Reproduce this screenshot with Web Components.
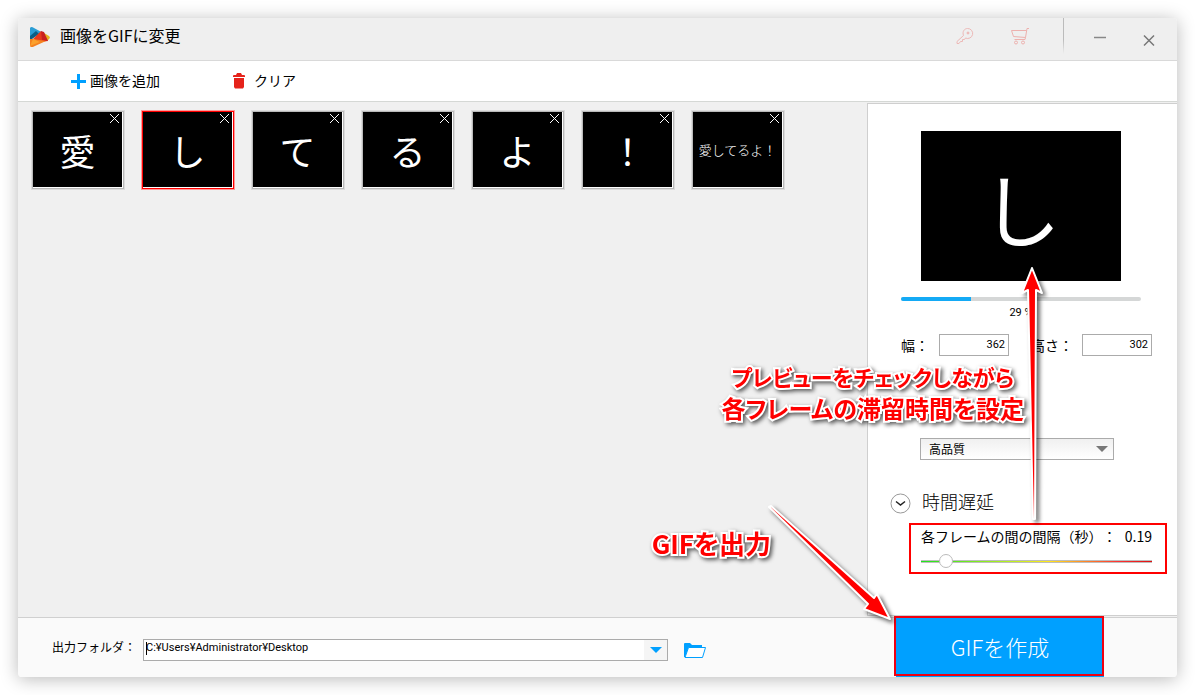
<!DOCTYPE html>
<html lang="ja">
<head>
<meta charset="utf-8">
<title>画像をGIFに変更</title>
<style>
html, body { height: 100%; }
body { margin: 0; background: #fff; color: #000; font-family: "Noto Sans CJK JP", sans-serif; }
</style>
</head>
<body>
<gif-maker></gif-maker>
<script>
const define = (name, html, setup) => {
  const template = document.createElement('template');
  template.innerHTML = html;
  customElements.define(name, class extends HTMLElement {
    connectedCallback() {
      if (this.shadowRoot) return;
      const root = this.attachShadow({ mode: 'open' });
      root.append(template.content.cloneNode(true));
      if (setup) setup(this, root);
    }
  });
};

define('title-bar', `
<style>
:host { display: flex; align-items: center; box-sizing: border-box; height: 43px; padding: 0 22px 0 12px; background: #efefef; border-bottom: 1px solid #d9d9d9; border-radius: 4px 4px 0 0; }
h1 { margin: 0; flex: 1; padding-left: 10px; font-size: 16px; line-height: 24px; font-weight: 400; padding-bottom: 8px; }
.logo { width: 20px; height: 20px; margin-top: -4px; }
button { border: 0; padding: 0; background: none; display: block; height: 18px; }
svg { display: block; }
.tools { display: flex; align-items: center; gap: 37px; padding-bottom: 6px; }
.sep { align-self: flex-start; width: 1px; height: 36px; margin: 0 30px 0 34px; background: linear-gradient(#bbb 60%, #efefef); }
.win { display: flex; gap: 37px; align-items: center; }
</style>
<svg class="logo" viewBox="0 0 20 20" aria-hidden="true">
  <path d="M0 1Q1-1 4 1L15 7 8 8 0 12Z" fill="#2b9dd4"/><path d="M0 9L6 4 9 7 2 12 0 12Z" fill="#0a5f86"/>
  <path d="M14 6L19 9Q21 11 18 13L15 14Z" fill="#e4b31f"/><path d="M3 12L11 4 18 14 10 15Z" fill="#e63b1c"/>
  <path d="M11 4L14 5 18 14 12 13Z" fill="#c9201d"/><path d="M0 12L3 12 16 14 5 19Q0 22 0 18Z" fill="#f58220"/><path d="M3 12L10 15 0 19Z" fill="#fba12d"/>
</svg>
<h1>画像をGIFに変更</h1>
<div class="tools">
  <button aria-label="登録"><svg width="18" height="18" viewBox="0 0 18 18" fill="none" stroke="#edb8b6"><path d="M7.500 8.500C6 4.500 8.500 1.500 11.500 1.500A5 5 0 1 1 9.500 11L8.500 12.500H6.500V14.500H4.500L3 16.500H1V14.500Z"/><circle cx="12" cy="6" r="1" fill="#edb8b6"/></svg></button>
  <button aria-label="購入"><svg width="18" height="18" viewBox="0 0 18 18" fill="none" stroke="#edb1ae"><path d="M18 1.500H16L14.500 10.500 2.500 9.500 0.500 3.500H15.500M14.500 10.500L14 12.500H3.500"/><circle cx="5" cy="15.500" r="1.500"/><circle cx="12" cy="15.500" r="1.500"/></svg></button>
</div>
<div class="sep"></div>
<div class="win">
  <button aria-label="最小化"><svg width="12" height="18" viewBox="0 0 12 18"><path d="M0 7.500H12" stroke="#888" stroke-width="1.500"/></svg></button>
  <button aria-label="閉じる"><svg width="12" height="18" viewBox="0 0 12 18"><path d="M1 5.500L11 15.500M11 5.500L1 15.500" stroke="#777" stroke-width="1.500"/></svg></button>
</div>`);

define('tool-bar', `
<style>
:host { display: flex; align-items: center; gap: 73px; box-sizing: border-box; height: 41px; padding-left: 53px; background: #fff; border-bottom: 1px solid #d5d8d5; }
</style>
<slot></slot>`);

define('tool-button', `
<style>
:host { display: block; }
button { display: flex; align-items: center; gap: var(--gap, 4px); border: 0; padding: 0; background: none; color: #000; font: 400 14px/20px "Noto Sans CJK JP", sans-serif; }
.text { padding-bottom: 3px; }
::slotted(svg) { display: block; }
</style>
<button><slot name="icon"></slot><span class="text"><slot></slot></span></button>`);

define('frame-thumb', `
<style>
:host { display: block; box-sizing: border-box; width: 94px; height: 80px; border: 1px solid #dcdcdc; position: relative; }
:host([selected]) { border-color: #f99; }
.pic { box-sizing: border-box; height: 78px; border: 1px solid #b9b9b9; background: #fff; padding: 0 1px 1px 0; }
:host([selected]) .pic { border-color: #f00; }
.art { height: 75px; background: #000; color: #fff; display: flex; align-items: center; justify-content: center; font-size: 36px; line-height: 36px; font-weight: 400; white-space: nowrap; box-sizing: border-box; }
:host([small]) .art { font-size: 13px; font-weight: 300; }
button { position: absolute; right: 4px; top: 2px; width: 11px; height: 11px; padding: 0; border: 0; background: none; }
svg { display: block; }
</style>
<div class="pic"><div class="art"><slot></slot></div></div>
<button aria-label="削除"><svg width="11" height="11"><path d="M1 1L10 10M10 1L1 10" stroke="#fff" shape-rendering="crispEdges"/></svg></button>`);

define('frame-list', `
<style>
:host { display: flex; flex-wrap: wrap; align-content: flex-start; gap: 16px; padding: 8px 13px; background: #f0f0f0; }
</style>
<slot></slot>`);

define('size-field', `
<style>
:host { display: flex; align-items: center; }
label { font-size: 14px; line-height: 20px; flex: 1; white-space: nowrap; }
input { box-sizing: border-box; width: 70px; height: 22px; border: 1px solid #ababab; padding: 0 3px 2px; text-align: right; font: 11px "Roboto", sans-serif; color: #000; background: #fff; outline: 0; }
</style>
<label for="v"></label><input id="v">`, (host, root) => {
  root.querySelector('label').textContent = host.getAttribute('label');
  root.querySelector('input').value = host.getAttribute('value');
});

define('settings-panel', `
<style>
:host { display: block; box-sizing: border-box; margin: 1px 0; border: 1px solid #cfcfcf; border-right: 0; background: #fff; padding: 27px 10px 0 22px; }
.preview { width: 200px; height: 150px; margin-left: 31px; background: #000; color: #fff; display: flex; align-items: center; justify-content: center; font-size: 80px; line-height: 80px; box-sizing: border-box; }
progress { appearance: none; display: block; width: 240px; height: 4px; margin: 16px 0 0 11px; border: 0; border-radius: 2px; overflow: hidden; background: #d5d7d7; }
progress::-webkit-progress-bar { background: #d5d7d7; }
progress::-webkit-progress-value { background: #14aaf5; }
.pct { width: 240px; margin: 4px 0 0 11px; text-align: center; font: 11px/16px "Roboto", sans-serif; }
.size { display: flex; gap: 22px; margin: 13px 0 0 11px; }
.size size-field:first-child { width: 108px; }
.size size-field:last-child { width: 121px; }
.quality { position: relative; width: 194px; margin: 82px 0 0 30px; }
select { appearance: none; display: block; box-sizing: border-box; width: 100%; height: 22px; border: 1px solid #ababab; border-radius: 0; padding: 0 8px; background: linear-gradient(#f0f0f0, #fff); font: 400 12px/20px "Noto Sans CJK JP", sans-serif; color: #000; }
.quality svg { position: absolute; right: 6px; top: 8px; pointer-events: none; }
.delay { display: flex; align-items: center; gap: 11px; margin-top: 28px; height: 28px; }
.delay button { width: 21px; height: 21px; margin-top: 3px; padding: 0; border: 0; background: none; }
.delay svg { display: block; }
h2 { margin: 0; font-size: 18px; line-height: 24px; font-weight: 300; padding-bottom: 2px; }
.interval { box-sizing: border-box; height: 51px; margin: 7px 0 0 19px; border: 2px solid #f00; padding: 1px 13px 0 10px; }
.interval label { display: flex; justify-content: space-between; font-size: 14px; line-height: 20px; white-space: nowrap; text-spacing-trim: space-all; }
input[type=range] { appearance: none; display: block; width: 231px; height: 14px; margin: 8px 0 0; background: linear-gradient(90deg, #1fe31f, #b8f020 38%, #ffe81a 55%, #f33 85%, #e01010) center / 100% 1px no-repeat, linear-gradient(#bdbdbd, #bdbdbd) center / 100% 3px no-repeat; }
input[type=range]::-webkit-slider-thumb { appearance: none; box-sizing: border-box; width: 14px; height: 14px; border: 1px solid #bbb; border-radius: 50%; background: #fff; }
</style>
<div class="preview">し</div>
<progress max="100" value="29" aria-label="プレビュー"></progress>
<div class="pct">29 %</div>
<div class="size"><size-field label="幅：" value="362"></size-field><size-field label="高さ：" value="302"></size-field></div>
<div class="quality"><select aria-label="品質"><option>高品質</option></select><svg width="12" height="7"><path d="M0 0H12L6 6Z" fill="#777"/></svg></div>
<div class="delay"><button aria-label="折りたたむ"><svg width="21" height="21" fill="none"><circle cx="10.500" cy="10.500" r="9.500" stroke="#999"/><path d="M6 8.500L10.500 12 15 8.500" stroke="#222" stroke-width="1.500"/></svg></button><h2>時間遅延</h2></div>
<div class="interval"><label for="r"><span>各フレームの間の間隔（秒）：</span><span>0.19</span></label><input id="r" type="range" min="0" max="2.3" step="0.01" value="0.19"></div>`);

define('output-bar', `
<style>
:host { display: flex; align-items: center; box-sizing: border-box; height: 60px; padding: 0 73px 0 34px; background: #fafafa; box-shadow: inset 0 1px #d0d0d0; border-radius: 0 0 4px 4px; }
label { width: 91px; font-size: 12px; line-height: 18px; white-space: nowrap; }
.combo { position: relative; box-sizing: border-box; display: flex; flex: 0 1 525px; height: 22px; margin-top: 5px; border: 1px solid #ababab; background: #fff; }
input { flex: 1; min-width: 0; border: 0; padding: 0 2px 4px; outline: 0; background: none; font: 11px "Roboto", sans-serif; color: #000; }
.caret { position: absolute; left: 2px; top: 2px; width: 1px; height: 13px; background: #000; }
.combo button { width: 23px; padding: 0; border: 0; background: #f5f5f5; display: grid; place-items: center; }
.folder { width: 23px; height: 17px; margin: 6px auto 0 16px; padding: 0; border: 0; background: none; }
svg { display: block; }
.make { position: relative; width: 208px; height: 60px; border: 0; padding: 0 0 2px; background: #00a0ff; color: #fff; font: 300 22px/32px "Noto Sans CJK JP", sans-serif; }
.make::after { content: ""; position: absolute; inset: -1px 0 1px -2px; border: 2px solid #f00010; }
</style>
<label for="p">出力フォルダ：</label>
<div class="combo"><input id="p" value="C:¥Users¥Administrator¥Desktop"><span class="caret"></span><button aria-label="履歴"><svg width="12" height="6"><path d="M0 0H12L6 6Z" fill="#00a0ff"/></svg></button></div>
<button class="folder" aria-label="フォルダを開く"><svg width="23" height="17" viewBox="0 0 23 17"><path d="M0 15V2Q0 1 1 1H6L8 3H18V6H5L1 15Z" fill="#00a0ff"/><path d="M4.500 5.500H21.500L18.500 15.500H1Z" fill="#fff" stroke="#00a0ff"/></svg></button>
<button class="make">GIFを作成</button>`);

define('call-out', `
<style>
:host { position: absolute; color: #f00; font-weight: 700; font-feature-settings: "palt"; text-align: center; white-space: nowrap; -webkit-text-stroke: 4px #fff; paint-order: stroke fill; filter: drop-shadow(2px 2px 2px rgba(0,0,0,.65)); }
</style>
<slot></slot>`);

define('callout-arrows', `
<style>
:host { position: absolute; top: 0; right: 0; pointer-events: none; }
svg { display: block; filter: drop-shadow(3px 3px 2px rgba(0,0,0,.6)); }
</style>
<svg width="427" height="678" viewBox="750 0 427 678" fill="#f00" stroke="#fff" stroke-width="2" stroke-linejoin="round" aria-hidden="true">
<path d="M1032 268L1042 293 1036 290 1035 519H1033L1028 290 1022 293Z"/>
<path d="M769 507L771 506 874 598 877 594 890 619 864 609 868 604Z"/>
</svg>`);

define('gif-maker', `
<style>
:host { box-sizing: border-box; min-height: 100vh; padding: 18px; display: grid; }
.window { position: relative; display: grid; grid-template-rows: auto auto 1fr auto; border-radius: 4px; box-shadow: 0 2px 18px rgba(0,0,0,.28); }
.main { display: grid; grid-template-columns: 1fr 310px; background: #f0f0f0; }
.overlay { position: absolute; inset: -18px 0 0 -18px; pointer-events: none; }
.one { right: 153px; top: 360px; }
.one div { font-size: 24px; line-height: 32px; }
.one div:first-child { font-size: 22px; }
.two { right: 406px; top: 527px; font-size: 26px; line-height: 32px; }
</style>
<div class="window">
  <title-bar></title-bar>
  <tool-bar>
    <tool-button><svg slot="icon" width="15" height="15"><path d="M0 7.500H15M7.500 0V15" stroke="#00a0ff" stroke-width="3"/></svg>画像を追加</tool-button>
    <tool-button style="--gap: 9px"><svg slot="icon" width="12" height="16"><path d="M0 3Q0 2 1 2H3L4 0H8L9 2H11Q12 2 12 3V4H0ZM1 5H11V14L10 15.500H2L1 14Z" fill="#e5231b"/></svg>クリア</tool-button>
  </tool-bar>
  <div class="main">
    <frame-list>
      <frame-thumb>愛</frame-thumb><frame-thumb selected>し</frame-thumb><frame-thumb>て</frame-thumb><frame-thumb>る</frame-thumb><frame-thumb>よ</frame-thumb><frame-thumb>！</frame-thumb><frame-thumb small>愛してるよ！</frame-thumb>
    </frame-list>
    <settings-panel></settings-panel>
  </div>
  <output-bar></output-bar>
  <div class="overlay">
    <callout-arrows></callout-arrows>
    <call-out class="one"><div>プレビューをチェックしながら</div><div>各フレームの滞留時間を設定</div></call-out>
    <call-out class="two">GIFを出力</call-out>
  </div>
</div>`);
</script>
</body>
</html>
